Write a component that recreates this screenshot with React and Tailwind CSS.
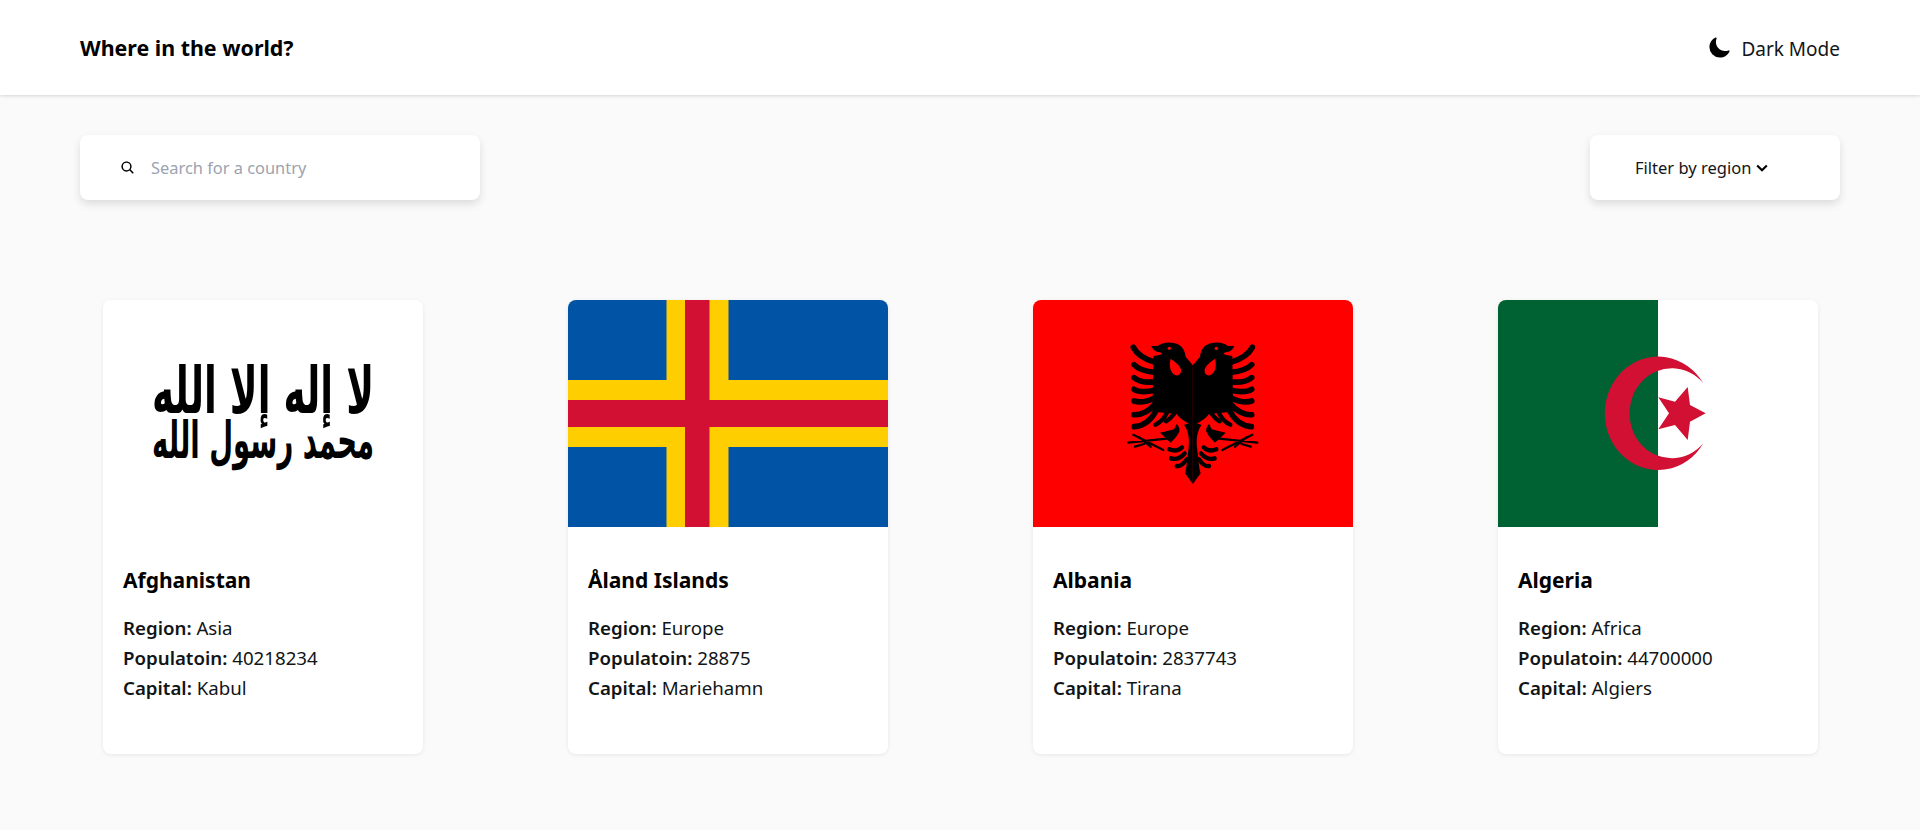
import { IoMoon, IoSearch } from 'react-icons/io5';

const countries = [
  { name: 'Afghanistan', region: 'Asia', population: '40218234', capital: 'Kabul', flag: <AfghanistanFlag /> },
  { name: 'Åland Islands', region: 'Europe', population: '28875', capital: 'Mariehamn', flag: <AlandFlag /> },
  { name: 'Albania', region: 'Europe', population: '2837743', capital: 'Tirana', flag: <AlbaniaFlag /> },
  { name: 'Algeria', region: 'Africa', population: '44700000', capital: 'Algiers', flag: <AlgeriaFlag /> },
];

function AfghanistanFlag() {
  return (
    <svg viewBox="0 0 320 227" className="block w-full h-full">
      <rect width="320" height="227" fill="#fff" />
      <g fill="#000" fontFamily="'DejaVu Sans', sans-serif" fontWeight="700" textAnchor="middle">
        <text transform="translate(160 113) scale(1 1.9)" fontSize="34" textLength="222" lengthAdjust="spacingAndGlyphs">لا إله إلا الله</text>
        <text transform="translate(160 158) scale(1 1.6)" fontSize="32" textLength="222" lengthAdjust="spacingAndGlyphs">محمد رسول الله</text>
      </g>
    </svg>
  );
}

function AlandFlag() {
  return (
    <svg viewBox="0 0 320 227" className="block w-full h-full">
      <rect width="320" height="227" fill="#0053a5" />
      <rect x="98.5" width="62" height="227" fill="#ffce00" />
      <rect y="80" width="320" height="67" fill="#ffce00" />
      <rect x="117" width="24.5" height="227" fill="#d21034" />
      <rect y="100" width="320" height="27" fill="#d21034" />
    </svg>
  );
}

function EagleHalf() {
  const feathers = [
    'M340 172C352 195 375 208 405 217',
    'M342 224C355 238 380 245 405 247',
    'M342 263C355 274 380 278 405 276',
    'M342 298C355 306 380 306 405 301',
    'M342 333C360 339 385 333 405 323',
    'M342 374C365 376 390 362 405 342',
    'M343 410C370 408 395 390 408 362',
    'M406 404C420 398 432 386 440 370',
    'M438 394C448 388 456 380 462 372',
    'M448 478C462 484 475 482 486 472',
    'M453 505C468 510 482 504 494 490',
    'M470 528C482 530 492 520 500 508',
  ];
  return (
    <g>
      <path d="M518.5 226L497 200C494 178 484 165 465 160C445 154 425 158 413 168L394 168C398 178 406 186 420 187C430 190 430 195 400 198L398 340L400 365L470 372C480 385 500 402 518.5 402Z" />
      <path d="M452 206C446 225 450 250 468 256C480 258 486 245 482 236C476 222 462 214 452 206Z" fill="#f00" />
      <path d="M518.5 395L492 405C505 420 510 450 505 480C500 520 500 535 495 550L518.5 582Z" />
      <path d="M420 428L462 418L470 402C478 410 480 420 478 425C470 440 460 450 452 458Z" />
      {feathers.map((d, i) => (
        <path key={d} d={d} fill="none" stroke="#000" strokeWidth={i < 7 ? 17 : 13} strokeLinecap="round" />
      ))}
      <path d="M325 458L440 446M340 434L430 480M345 470L372 462M358 442L392 470" fill="none" stroke="#000" strokeWidth="7" strokeLinecap="round" />
      <circle cx="448" cy="175" r="5" fill="#f00" />
    </g>
  );
}

function AlbaniaFlag() {
  return (
    <svg viewBox="39 30 960 681" className="block w-full h-full">
      <rect x="39" y="30" width="960" height="681" fill="#f00" />
      <EagleHalf />
      <g transform="translate(1037 0) scale(-1 1)">
        <EagleHalf />
      </g>
    </svg>
  );
}

function AlgeriaFlag() {
  return (
    <svg viewBox="0 0 320 227" className="block w-full h-full">
      <rect width="320" height="227" fill="#fff" />
      <rect width="160" height="227" fill="#006233" />
      <path d="M205.3 83.3A53.3 56.7 0 1 0 205.3 143.3A42.3 45 0 1 1 205.3 83.3Z" fill="#d21034" />
      <path
        d="M207.7 113.3L192 105L189.7 87L177 101.7L160.3 97.3L171 113.3L160.3 129.3L177 125L189.7 140L192 121.7Z"
        fill="#d21034"
      />
    </svg>
  );
}

function CountryCard({ country }) {
  return (
    <div className="w-[320px] h-[454px] bg-white rounded-lg shadow-[0_1px_4px_rgba(0,0,0,0.08)] overflow-hidden">
      <div className="h-[227px]">{country.flag}</div>
      <div className="px-5 pt-[38px]">
        <h2 className="text-[21px] leading-[30px] font-bold text-black">{country.name}</h2>
        <div className="mt-[18px] text-[18.7px] leading-[30px] text-[#111517]">
          <p><span className="font-semibold">Region:</span> {country.region}</p>
          <p><span className="font-semibold">Populatoin:</span> {country.population}</p>
          <p><span className="font-semibold">Capital:</span> {country.capital}</p>
        </div>
      </div>
    </div>
  );
}

export default function App() {
  return (
    <div className="min-h-[830px] bg-[#fafafa] font-['Noto_Sans',sans-serif] text-[#111517]">
      <header className="h-[95px] bg-white shadow-[0_1px_3px_rgba(0,0,0,0.15)] px-20 flex items-center justify-between">
        <h1 className="text-[21.4px] font-bold text-black pt-[1px]">Where in the world?</h1>
        <div className="flex items-center gap-[10px] text-[19px] pt-[3px]">
          <IoMoon className="text-[23px] text-black -mt-[3px]" />
          <span>Dark Mode</span>
        </div>
      </header>

      <main className="px-20 pt-10">
        <div className="flex items-center justify-between">
          <div className="w-[400px] h-[65px] bg-white rounded-lg shadow-[0_4px_8px_rgba(0,0,0,0.12)] flex items-center pl-10 gap-[16px]">
            <IoSearch className="text-[15px] text-black" />
            <input
              placeholder="Search for a country"
              className="text-[16.4px] outline-none flex-1 pt-[2px] placeholder:text-[#9ca3af]"
            />
          </div>
          <div className="w-[250px] h-[65px] bg-white rounded-lg shadow-[0_4px_8px_rgba(0,0,0,0.12)] flex items-center pl-[45px] gap-[5px] text-[16.5px]">
            <span className="pt-[2px]">Filter by region</span>
            <svg viewBox="0 0 12 8" className="w-[12px] h-[8px]">
              <path d="M1.2 1.5L6 6.2L10.8 1.5" fill="none" stroke="#000" strokeWidth="2.2" />
            </svg>
          </div>
        </div>

        <div className="mt-[100px] pl-[23px] flex gap-[145px]">
          {countries.map((c) => (
            <CountryCard key={c.name} country={c} />
          ))}
        </div>
      </main>
    </div>
  );
}
